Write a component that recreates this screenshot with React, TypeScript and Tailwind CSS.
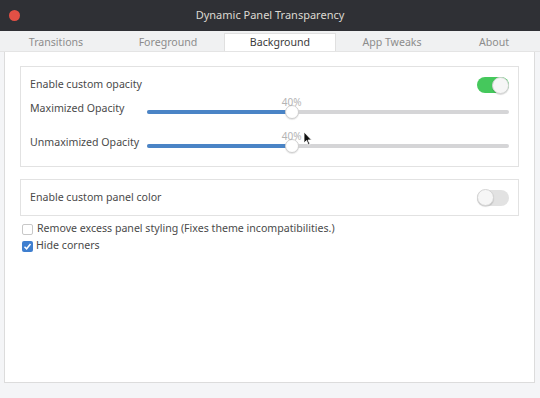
import React from "react";

const font = { fontFamily: '"Noto Sans", "Open Sans", sans-serif' };

function Switch({ on }: { on: boolean }) {
  return (
    <div
      className={`w-[32px] h-[16px] rounded-full flex items-center ${on ? "bg-[#45c85c] justify-end" : "bg-[#e2e2e2] justify-start"}`}
    >
      <div className="w-[17px] h-[17px] rounded-full bg-[#f6f6f6] border border-[#d4d4d4] shadow-[0_1px_1px_rgba(0,0,0,0.15)]" />
    </div>
  );
}

function Slider({ pct }: { pct: number }) {
  return (
    <div className="relative flex-1 h-[16px] flex items-center">
      <div className="w-full h-[4px] rounded-full bg-[#d5d5d7] flex">
        <div className="h-full rounded-full bg-[#4a84c6]" style={{ width: `${pct}%` }} />
      </div>
      <div
        className="absolute top-1/2 w-[14px] h-[14px] -mt-[7px] -ml-[7px] rounded-full bg-white border border-[#cfcfcf] shadow-[0_1px_1px_rgba(0,0,0,0.1)]"
        style={{ left: `${pct}%` }}
      />
      <div
        className="absolute -top-[7px] -ml-[10px] text-[10px] text-[#b4b4b4] leading-none"
        style={{ left: `${pct}%` }}
      >
        40%
      </div>
    </div>
  );
}

export default function App() {
  const tabs = ["Transitions", "Foreground", "Background", "App Tweaks", "About"];
  return (
    <div className="w-[540px] h-[398px] bg-[#f4f5f7] flex flex-col text-[10.6px] text-[#4a4a4a]" style={font}>
      <div className="h-[31px] bg-[#2f3035] flex items-center shrink-0">
        <div className="w-[60px] flex items-center pl-[9px]">
          <div className="w-[11px] h-[11px] rounded-full bg-[#e25045]" />
        </div>
        <div className="flex-1 text-center text-[#dcd9d2] text-[11px]">Dynamic Panel Transparency</div>
        <div className="w-[60px]" />
      </div>
      <div className="h-[21px] flex shrink-0 bg-[#f0f1f2] border-b border-[#e4e4e4]">
        {tabs.map((t, i) => (
          <div
            key={t}
            className={`${i === 4 ? "flex-1" : "w-[112px]"} flex items-center justify-center ${i === 2 ? "bg-white text-[#3a3a3a] mt-[2px] pt-[1px] border-x border-t border-[#e0e0e0]" : "text-[#8c8c8c] pt-[3px]"}`}
          >
            {t}
          </div>
        ))}
      </div>
      <div className="flex-1 mx-[4px] mr-[5px] mb-[15px] bg-white border-x border-b border-[#dcdcdc] px-[15px] pt-[14px] flex flex-col">
        <div className="border border-[#e2e2e2] h-[101px] px-[9px] pt-[9px] flex flex-col">
          <div className="flex items-center justify-between h-[18px]">
            <span>Enable custom opacity</span>
            <Switch on />
          </div>
          <div className="flex items-center mt-[10px] h-[16px]">
            <span className="w-[117px] mb-[6px]">Maximized Opacity</span>
            <Slider pct={40} />
          </div>
          <div className="flex items-center mt-[18px] h-[16px] relative">
            <span className="w-[117px] mb-[7px]">Unmaximized Opacity</span>
            <Slider pct={40} />
            <svg className="absolute left-[273px] -top-[7px]" width="10" height="15" viewBox="0 0 10 15">
              <path d="M1 1 L1 12 L3.5 9.5 L5.5 14 L7 13.3 L5 9 L8.5 9 Z" fill="#111" stroke="#fff" strokeWidth="0.8" />
            </svg>
          </div>
        </div>
        <div className="border border-[#e2e2e2] h-[37px] mt-[12px] px-[9px] flex items-center justify-between">
          <span>Enable custom panel color</span>
          <Switch on={false} />
        </div>
        <div className="flex items-center mt-[5px] pl-[2px] h-[16px]">
          <div className="w-[11px] h-[11px] rounded-[2px] border border-[#c8c8c8] bg-white" />
          <span className="ml-[4px]">Remove excess panel styling (Fixes theme incompatibilities.)</span>
        </div>
        <div className="flex items-center mt-[1px] pl-[2px] h-[16px]">
          <div className="w-[11px] h-[11px] rounded-[2px] bg-[#3f7fcf] flex items-center justify-center">
            <svg width="9" height="9" viewBox="0 0 9 9">
              <path d="M1.5 4.8 L3.6 6.8 L7.5 2" fill="none" stroke="#fff" strokeWidth="1.5" />
            </svg>
          </div>
          <span className="ml-[3px]">Hide corners</span>
        </div>
      </div>
    </div>
  );
}
